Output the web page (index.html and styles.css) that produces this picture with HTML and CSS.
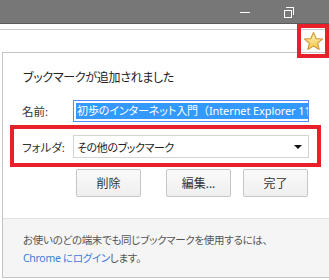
FILE: index.html
```html
<!DOCTYPE html>
<html>
<head>
    <title>ブックマーク</title>
    <link rel="stylesheet" href="styles.css">
</head>
<body>
    <div class="titlebar">
        <span class="win-min"></span>
        <span class="win-restore"><i></i></span>
    </div>
    <div class="toolbar"></div>

    <div class="star-mark">
        <svg width="21" height="21" viewBox="0 0 20 20">
            <defs>
                <linearGradient id="sg" x1="0" y1="0" x2="0" y2="1">
                    <stop offset="0" stop-color="#fff6c0"/>
                    <stop offset="1" stop-color="#f3c640"/>
                </linearGradient>
            </defs>
            <path d="M10 1.5 L12.5 7.2 L18.6 7.6 L13.9 11.5 L15.4 17.6 L10 14.3 L4.6 17.6 L6.1 11.5 L1.4 7.6 L7.5 7.2 Z" fill="url(#sg)" stroke="#d49a3a" stroke-width="1.1" stroke-linejoin="round"/>
        </svg>
    </div>

    <div class="dialog">
        <div class="dialog-title">ブックマークが追加されました</div>

        <div class="row name-row">
            <label>名前:</label>
            <div class="field name-field"><span class="selected">初歩のインターネット入門<span class="paren">（</span>Internet Explorer 11編）</span></div>
        </div>

        <div class="row folder-row">
            <label>フォルダ:</label>
            <div class="field select-field">
                <span>その他のブックマーク</span>
                <span class="arrow"></span>
            </div>
        </div>

        <div class="buttons">
            <button class="btn btn-remove">削除</button>
            <button class="btn">編集...</button>
            <button class="btn">完了</button>
        </div>

        <div class="footer">
            お使いのどの端末でも同じブックマークを使用するには、<br>
            <a href="#">Chrome にログイン</a>します。
        </div>
    </div>
</body>
</html>
```

FILE: styles.css
```css
* {
    box-sizing: border-box;
}
body {
    margin: 0;
    width: 329px;
    height: 280px;
    overflow: hidden;
    background: white;
    font-family: "Noto Sans", "Noto Sans CJK JP", sans-serif;
    font-feature-settings: "palt";
    color: #333;
    position: relative;
}
.titlebar {
    height: 24px;
    background: #777777;
    border-bottom: 1px solid #5c5c5c;
    position: relative;
}
.win-min {
    position: absolute;
    left: 240px;
    top: 12px;
    width: 10px;
    height: 1px;
    background: white;
}
.win-restore {
    position: absolute;
    left: 284px;
    top: 10px;
    width: 8px;
    height: 8px;
    border: 1px solid white;
}
.win-restore i {
    position: absolute;
    left: 1px;
    top: -4px;
    width: 8px;
    height: 8px;
    border-top: 1px solid white;
    border-right: 1px solid white;
}
.toolbar {
    height: 6px;
    border-bottom: 1px solid #cfcfcf;
}
.star-mark {
    position: absolute;
    left: 297px;
    top: 24px;
    width: 32px;
    height: 34px;
    border: 4px solid #e8202a;
    display: flex;
    align-items: center;
    justify-content: center;
}
.dialog {
    margin: 22px 0 0 2px;
    width: 345px;
    border: 1px solid #c4c4c4;
    background: white;
}
.dialog-title {
    font-size: 12px;
    line-height: 18px;
    padding: 16px 0 0 20px;
    letter-spacing: -0.3px;
    color: #222;
}
.row {
    display: flex;
    align-items: center;
    margin-left: 7px;
    width: 311px;
}
.row label {
    width: 59px;
    padding-left: 8px;
    font-size: 11.5px;
    white-space: nowrap;
    color: #333;
}
.name-row {
    margin-top: 13px;
    border: 4px solid transparent;
    border-width: 0 4px;
}
.folder-row {
    margin-top: 3px;
    border: 4px solid #e8202a;
    padding: 6px 0 5px 0;
}
.field {
    width: 236px;
    height: 22px;
    font-size: 11px;
    display: flex;
    align-items: center;
    white-space: nowrap;
    overflow: hidden;
}
.name-field {
    border: 1px solid #4d90fe;
    padding: 0 2px;
}
.selected {
    background: #3399ff;
    color: white;
    line-height: 16px;
    padding-left: 1px;
    letter-spacing: -0.1px;
}
.paren {
    font-feature-settings: normal;
}
.select-field {
    border: 1px solid #d4d4d4;
    height: 23px;
    padding: 0 6px 0 3px;
    justify-content: space-between;
    color: #222;
    letter-spacing: -0.4px;
}
.arrow {
    width: 0;
    height: 0;
    border-left: 4px solid transparent;
    border-right: 4px solid transparent;
    border-top: 4px solid #111;
}
.buttons {
    display: flex;
    gap: 12px;
    margin: 2px 0 21px 73px;
}
.btn {
    width: 65px;
    height: 28px;
    border: 1px solid #c6c6c6;
    border-radius: 2px;
    background: linear-gradient(#fafafa, #efefef);
    font-family: inherit;
    font-feature-settings: "palt";
    font-size: 12px;
    color: #333;
}
.btn-remove {
    margin-right: 13px;
}
.footer {
    border-top: 1px solid #e2e2e2;
    background: #f5f5f5;
    height: 59px;
    padding: 12px 0 0 20px;
    font-size: 10.5px;
    letter-spacing: -0.3px;
    line-height: 18px;
    color: #555;
}
.footer a {
    color: #3b7ed8;
    text-decoration: none;
}
```
